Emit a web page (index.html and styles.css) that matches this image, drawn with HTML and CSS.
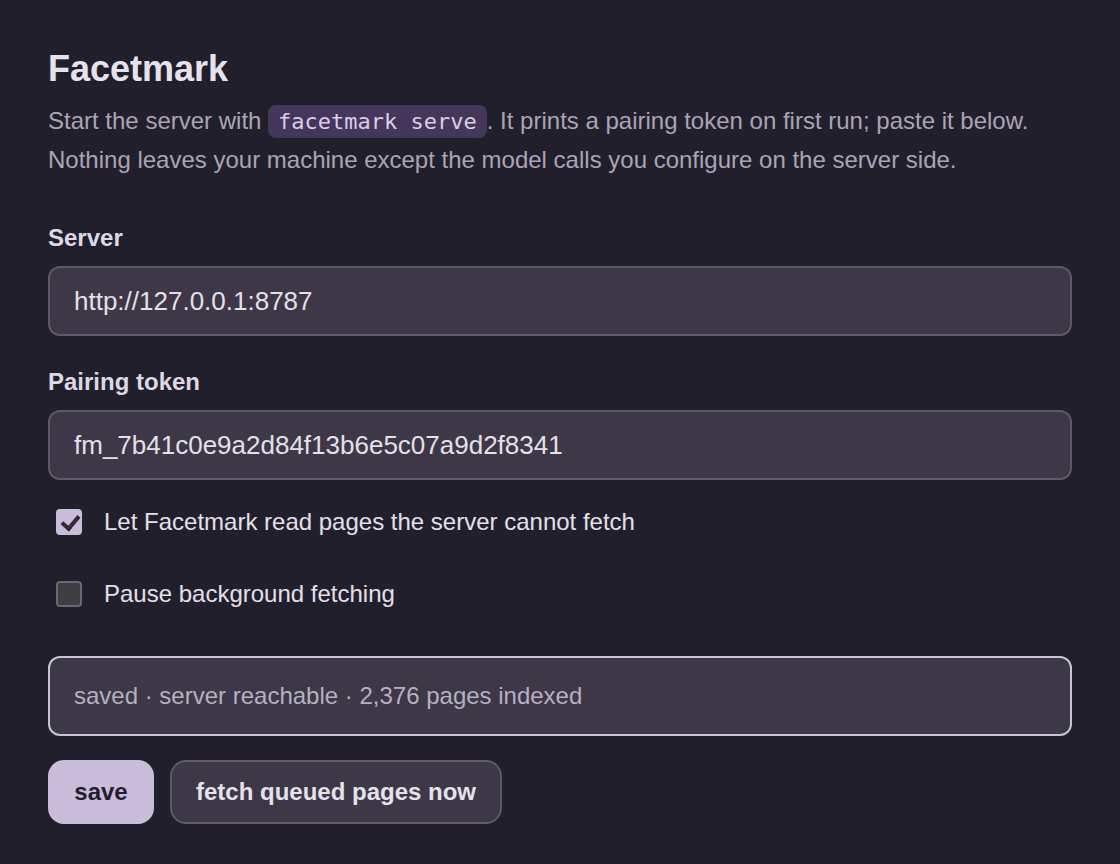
FILE: index.html
```html
<!DOCTYPE html>
<html lang="en">
<head>
  <meta charset="UTF-8">
  <title>Facetmark</title>
  <meta name="viewport" content="width=device-width,initial-scale=1">
  <link rel="stylesheet" href="styles.css">
</head>
<body>
  <main class="ajustes">
    <h1>Facetmark</h1>
    <p class="intro">Start the server with <code>facetmark serve</code>. It prints a pairing token on first run; paste it below. Nothing leaves your machine except the model calls you configure on the server side.</p>

    <label class="campo">
      <span class="etiqueta">Server</span>
      <input id="server" value="http://127.0.0.1:8787" autocomplete="off">
    </label>

    <label class="campo">
      <span class="etiqueta">Pairing token</span>
      <input id="token" value="fm_7b41c0e9a2d84f13b6e5c07a9d2f8341" autocomplete="off">
    </label>

    <div class="opciones">
      <label class="opcion">
        <input type="checkbox" id="leer-local" checked>
        <span>Let Facetmark read pages the server cannot fetch</span>
      </label>
      <label class="opcion">
        <input type="checkbox" id="pausa">
        <span>Pause background fetching</span>
      </label>
    </div>

    <div class="estado" id="estado">saved · server reachable · 2,376 pages indexed</div>

    <div class="botones">
      <button class="primario" id="btn-save">save</button>
      <button class="secundario" id="btn-fetch">fetch queued pages now</button>
    </div>
  </main>
</body>
</html>
```

FILE: styles.css
```css
:root {
  --fondo: #221f2d;
  --caja: #3d3747;
  --borde: #5e5869;
  --texto: #e4e0ea;
  --texto-suave: #aaa4b5;
  --lila: #cabddb;
  --lila-code: #45365c;
}
html, body {
  margin: 0;
  padding: 0;
  background: var(--fondo);
  color: var(--texto);
  font-family: 'Liberation Sans', Arial, sans-serif;
}
.ajustes {
  padding: 48px 48px 40px 48px;
  display: flex;
  flex-direction: column;
}
h1 {
  margin: 0;
  font-size: 36px;
  font-weight: bold;
  color: #e6e2ec;
}
.intro {
  margin: 12px 0 0 0;
  font-size: 24px;
  line-height: 38px;
  color: var(--texto-suave);
}
.intro code {
  font-family: 'DejaVu Sans Mono', monospace;
  font-size: 22px;
  background: var(--lila-code);
  color: #d9cfe6;
  padding: 4px 10px;
  border-radius: 8px;
}
.campo {
  display: flex;
  flex-direction: column;
  gap: 14px;
  margin-top: 45px;
}
.campo + .campo { margin-top: 32px; }
.etiqueta {
  font-size: 24px;
  font-weight: bold;
  color: #ddd8e4;
}
input:not([type]) {
  font-family: inherit;
  font-size: 26px;
  color: var(--texto);
  background: var(--caja);
  border: 2px solid var(--borde);
  border-radius: 12px;
  height: 70px;
  padding: 0 24px;
  box-sizing: border-box;
  outline: none;
}
.opciones {
  display: flex;
  flex-direction: column;
  gap: 44px;
  margin-top: 28px;
}
.opcion {
  display: flex;
  align-items: center;
  gap: 22px;
  padding-left: 8px;
  font-size: 24px;
  color: var(--texto);
}
.opcion input {
  appearance: none;
  margin: 0;
  width: 26px;
  height: 26px;
  border: 2px solid #6b6874;
  border-radius: 4px;
  background: #3e3d40;
  box-sizing: border-box;
  position: relative;
}
.opcion input:checked {
  background: var(--lila);
  border-color: var(--lila);
}
/* marca del check */
.opcion input:checked::after {
  content: "";
  position: absolute;
  left: 7px;
  top: 1px;
  width: 7px;
  height: 14px;
  border: solid #2f2b36;
  border-width: 0 4px 4px 0;
  transform: rotate(40deg);
}
.estado {
  margin-top: 48px;
  height: 80px;
  box-sizing: border-box;
  display: flex;
  align-items: center;
  padding: 0 24px;
  background: var(--caja);
  border: 2px solid #c3c7d4;
  border-radius: 12px;
  font-size: 24px;
  color: #b6b0c2;
}
.botones {
  display: flex;
  gap: 16px;
  margin-top: 24px;
}
button {
  font-family: inherit;
  font-size: 24px;
  font-weight: bold;
  height: 64px;
  border-radius: 16px;
  padding: 0 24px;
  cursor: pointer;
  box-sizing: border-box;
}
.primario {
  background: var(--lila);
  color: #221f2d;
  border: 2px solid var(--lila);
  min-width: 106px;
}
.secundario {
  background: var(--caja);
  color: #e6e2ec;
  border: 2px solid var(--borde);
  min-width: 332px;
}
```
